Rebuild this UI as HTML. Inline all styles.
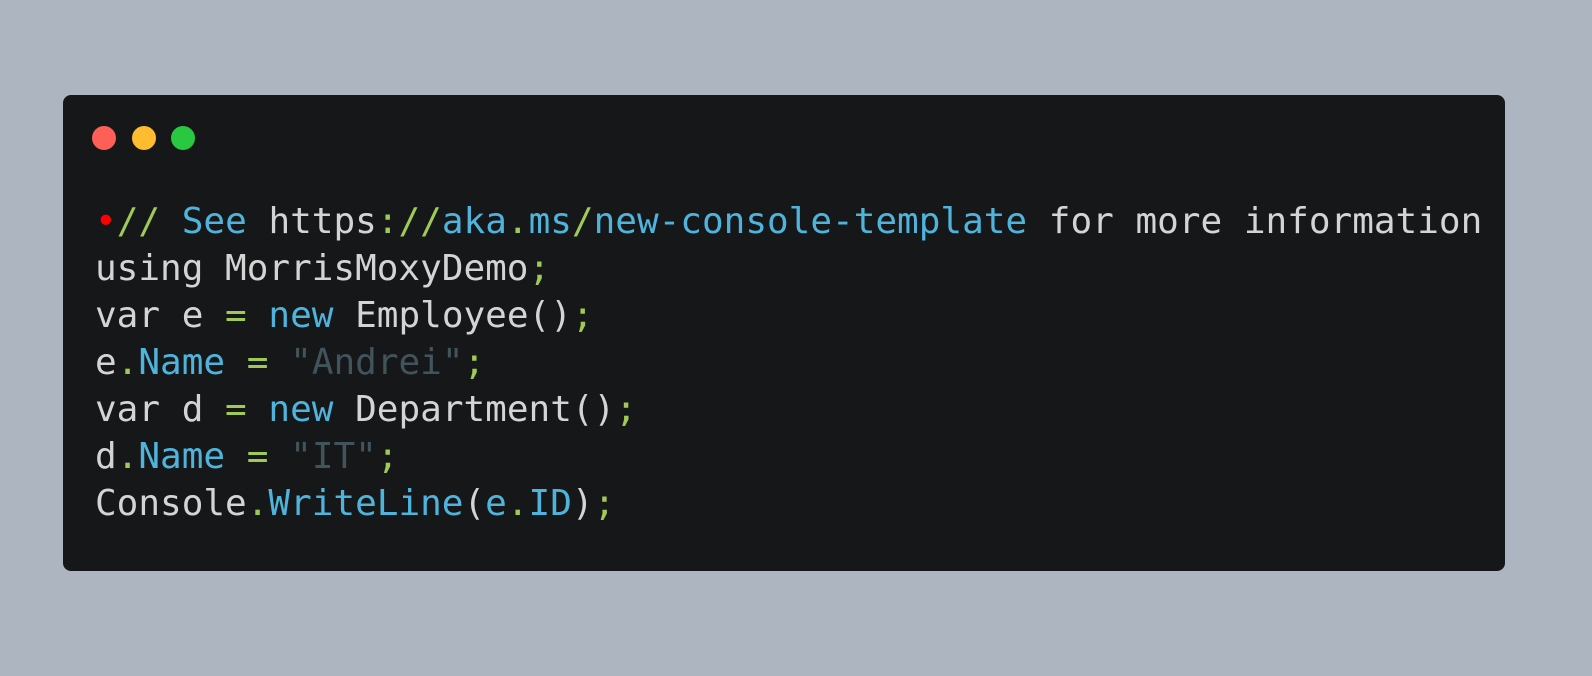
<!DOCTYPE html>
<html><head><meta charset="utf-8"><style>
html,body{margin:0;padding:0;}
body{width:1592px;height:676px;background:#adb6c0;position:relative;overflow:hidden;}
.card{position:absolute;left:63px;top:95px;width:1442px;height:476px;background:#161719;border-radius:8px;}
.dot{position:absolute;top:126px;width:24px;height:24px;border-radius:50%;}
pre{position:absolute;left:95px;top:198px;margin:0;font-family:"DejaVu Sans Mono","Liberation Mono",monospace;font-size:36px;line-height:47px;color:#d4d4d4;}
.b{color:#4eb4dc}.g{color:#9fca56}.s{color:#41535b}.r{color:#ff0000}
</style></head><body>
<div class="card"></div>
<div class="dot" style="left:92px;background:#fe5f57"></div>
<div class="dot" style="left:132px;background:#febc2e"></div>
<div class="dot" style="left:171px;background:#28c840"></div>
<pre><span class="r">•</span><span class="g">//</span> <span class="b">See</span> https<span class="g">://</span><span class="b">aka</span><span class="g">.</span><span class="b">ms</span><span class="g">/</span><span class="b">new-console-template</span> for more information
using MorrisMoxyDemo<span class="g">;</span>
var e <span class="g">=</span> <span class="b">new</span> Employee()<span class="g">;</span>
e<span class="g">.</span><span class="b">Name</span> <span class="g">=</span> <span class="s">"Andrei"</span><span class="g">;</span>
var d <span class="g">=</span> <span class="b">new</span> Department()<span class="g">;</span>
d<span class="g">.</span><span class="b">Name</span> <span class="g">=</span> <span class="s">"IT"</span><span class="g">;</span>
Console<span class="g">.</span><span class="b">WriteLine</span>(<span class="b">e</span><span class="g">.</span><span class="b">ID</span>)<span class="g">;</span></pre>
</body></html>
